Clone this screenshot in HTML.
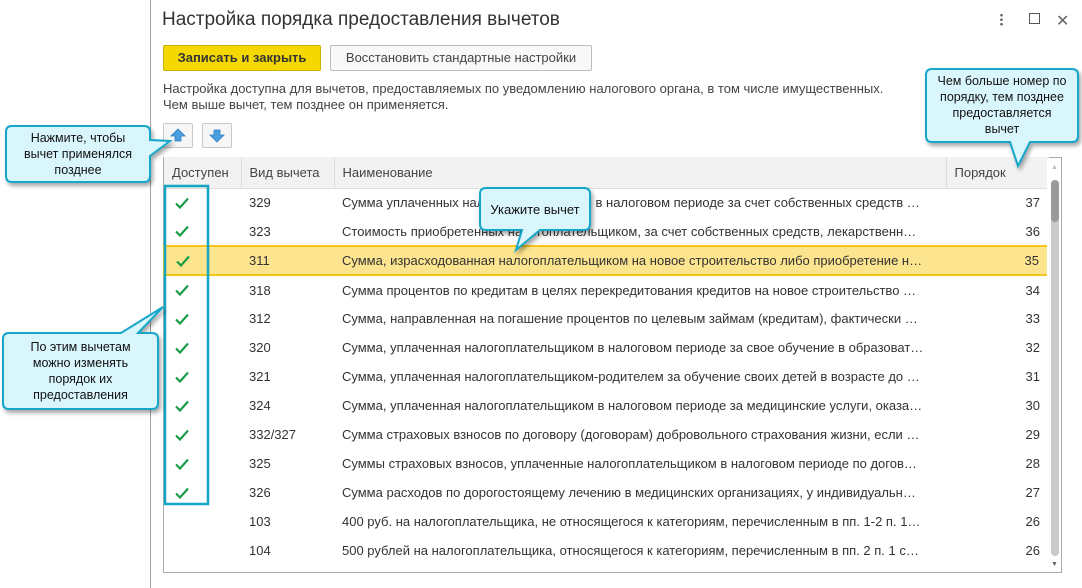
<!DOCTYPE html>
<html><head><meta charset="utf-8"><style>
*{box-sizing:border-box;margin:0;padding:0}
body{width:1082px;height:588px;background:#fff;font-family:"Liberation Sans",Arial,sans-serif;position:relative;overflow:hidden;color:#333}
.abs{position:absolute}
.vl{left:150px;top:0;width:1px;height:588px;background:#a0a0a0}
.title{left:162px;top:9px;font-size:19px;color:#333}
.btn{top:45px;height:26px;border-radius:2px;font-size:13px;line-height:24px;text-align:center}
.b1{left:163px;width:158px;background:#f5d800;border:1px solid #c9b100;font-weight:bold;color:#333}
.b2{left:330px;width:262px;background:#f8f8f8;border:1px solid #bdbdbd;color:#444}
.txt{left:163px;top:81px;font-size:13px;line-height:15.5px;color:#444}
.ab{top:123px;width:30px;height:25px;border:1px solid #c8c8c8;border-radius:2px;background:#f6f6f6}
table{position:absolute;left:163px;top:157px;width:884px;border-collapse:collapse;font-size:13px;table-layout:fixed}
th{height:31px;background:#f2f2f2;font-weight:normal;text-align:left;padding-left:8px;color:#444;border-right:1px solid #ddd;border-bottom:1px solid #ddd}
td{height:29px;padding-left:8px;white-space:nowrap;overflow:hidden;color:#333}
td.n{text-align:right;padding-right:8px}
td.c{padding-left:11px;padding-top:3px}
tr.sel td{background:#fde58f;border-top:2px solid #f6c51a;border-bottom:2px solid #f6c51a}
tr.sel td:first-child{border-left:2px solid #f6c51a}
tr.sel td:last-child{border-right:2px solid #f6c51a}
.frame{left:163px;top:157px;width:899px;height:416px;border:1px solid #aaa}
.ct{font-size:12.5px;color:#111;text-align:center;line-height:16px}
</style></head><body>
<svg width="0" height="0" style="position:absolute"><defs><symbol id="ck" viewBox="0 0 14 12"><path d="M1 6.5 L5 10.5 L13 1.5" fill="none" stroke="#1a9c4a" stroke-width="2.2"/></symbol></defs></svg>
<div class="abs vl"></div>
<div class="abs title">Настройка порядка предоставления вычетов</div>
<div class="abs" style="left:1000px;top:13px;width:3px;height:13px;background:radial-gradient(circle,#666 1.2px,transparent 1.5px) 0 0/3px 4.5px"></div>
<div class="abs" style="left:1029px;top:13px;width:11px;height:11px;border:1.3px solid #555"></div>
<div class="abs" style="left:1056px;top:11px;font-size:16px;color:#666">✕</div>
<div class="abs btn b1">Записать и закрыть</div>
<div class="abs btn b2">Восстановить стандартные настройки</div>
<div class="abs txt">Настройка доступна для вычетов, предоставляемых по уведомлению налогового органа, в том числе имущественных.<br>Чем выше вычет, тем позднее он применяется.</div>
<div class="abs ab" style="left:163px"><svg width="28" height="23"><path d="M14 5 L21 12 L17 12 L17 17 L11 17 L11 12 L7 12 Z" fill="#4a9fe0" stroke="#2f7fc0" stroke-width="0.8"/></svg></div>
<div class="abs ab" style="left:202px"><svg width="28" height="23"><path d="M14 18 L21 11 L17 11 L17 6 L11 6 L11 11 L7 11 Z" fill="#4a9fe0" stroke="#2f7fc0" stroke-width="0.8"/></svg></div>
<div class="abs frame"></div>
<table>
<colgroup><col style="width:77px"><col style="width:93px"><col style="width:612px"><col style="width:102px"></colgroup>
<tr><th>Доступен</th><th>Вид вычета</th><th>Наименование</th><th>Порядок</th></tr>
<tr><td class="c"><svg width="14" height="12"><use href="#ck"/></svg></td><td>329</td><td>Сумма уплаченных налогоплательщиком в налоговом периоде за счет собственных средств …</td><td class="n">37</td></tr>
<tr><td class="c"><svg width="14" height="12"><use href="#ck"/></svg></td><td>323</td><td>Стоимость приобретенных налогоплательщиком, за счет собственных средств, лекарственн…</td><td class="n">36</td></tr>
<tr class="sel"><td class="c"><svg width="14" height="12"><use href="#ck"/></svg></td><td>311</td><td>Сумма, израсходованная налогоплательщиком на новое строительство либо приобретение н…</td><td class="n">35</td></tr>
<tr><td class="c"><svg width="14" height="12"><use href="#ck"/></svg></td><td>318</td><td>Сумма процентов по кредитам в целях перекредитования кредитов на новое строительство …</td><td class="n">34</td></tr>
<tr><td class="c"><svg width="14" height="12"><use href="#ck"/></svg></td><td>312</td><td>Сумма, направленная на погашение процентов по целевым займам (кредитам), фактически …</td><td class="n">33</td></tr>
<tr><td class="c"><svg width="14" height="12"><use href="#ck"/></svg></td><td>320</td><td>Сумма, уплаченная налогоплательщиком в налоговом периоде за свое обучение в образоват…</td><td class="n">32</td></tr>
<tr><td class="c"><svg width="14" height="12"><use href="#ck"/></svg></td><td>321</td><td>Сумма, уплаченная налогоплательщиком-родителем за обучение своих детей в возрасте до …</td><td class="n">31</td></tr>
<tr><td class="c"><svg width="14" height="12"><use href="#ck"/></svg></td><td>324</td><td>Сумма, уплаченная налогоплательщиком в налоговом периоде за медицинские услуги, оказа…</td><td class="n">30</td></tr>
<tr><td class="c"><svg width="14" height="12"><use href="#ck"/></svg></td><td>332/327</td><td>Сумма страховых взносов по договору (договорам) добровольного страхования жизни, если …</td><td class="n">29</td></tr>
<tr><td class="c"><svg width="14" height="12"><use href="#ck"/></svg></td><td>325</td><td>Суммы страховых взносов, уплаченные налогоплательщиком в налоговом периоде по догов…</td><td class="n">28</td></tr>
<tr><td class="c"><svg width="14" height="12"><use href="#ck"/></svg></td><td>326</td><td>Сумма расходов по дорогостоящему лечению в медицинских организациях, у индивидуальн…</td><td class="n">27</td></tr>
<tr><td class="c"></td><td>103</td><td>400 руб. на налогоплательщика, не относящегося к категориям, перечисленным в пп. 1-2 п. 1…</td><td class="n">26</td></tr>
<tr><td class="c"></td><td>104</td><td>500 рублей на налогоплательщика, относящегося к категориям, перечисленным в пп. 2 п. 1 с…</td><td class="n">26</td></tr>
</table>
<div class="abs" style="left:1047px;top:158px;width:14px;height:414px;background:#fff"></div>
<div class="abs" style="left:1051px;top:180px;width:8px;height:376px;border-radius:4px;background:#c9c9c9"></div>
<div class="abs" style="left:1051px;top:180px;width:8px;height:42px;border-radius:4px;background:#9a9a9a"></div>
<div class="abs" style="left:1051px;top:164px;font-size:7px;color:#bbb">▲</div>
<div class="abs" style="left:1051px;top:561px;font-size:7px;color:#666">▼</div>
<svg class="abs" style="left:0;top:0" width="1082" height="588">
<defs><filter id="sh" x="-20%" y="-20%" width="140%" height="140%"><feDropShadow dx="2" dy="3" stdDeviation="2" flood-color="#000" flood-opacity="0.35"/></filter></defs>
<rect x="165" y="186" width="43" height="318" fill="none" stroke="#14a4c4" stroke-width="2.5"/>
<g fill="#daf6fd" stroke="#17a6c8" stroke-width="2" filter="url(#sh)">
<path d="M12 126 H144 Q150 126 150 132 V140 L170 141 L150 156 V176 Q150 182 144 182 H12 Q6 182 6 176 V132 Q6 126 12 126 Z"/>
<path d="M486 188 H584 Q590 188 590 194 V224 Q590 230 584 230 H540 L516 250 L522 230 H486 Q480 230 480 224 V194 Q480 188 486 188 Z"/>
<path d="M932 69 H1072 Q1078 69 1078 75 V136 Q1078 142 1072 142 H1030 L1018 166 L1010 142 H932 Q926 142 926 136 V75 Q926 69 932 69 Z"/>
<path d="M9 333 H121 L163 307 L138 333 H152 Q158 333 158 339 V403 Q158 409 152 409 H9 Q3 409 3 403 V339 Q3 333 9 333 Z"/>
</g>
</svg>
<div class="abs ct" style="left:6px;top:130px;width:144px">Нажмите, чтобы<br>вычет применялся<br>позднее</div>
<div class="abs ct" style="left:480px;top:202px;width:110px;font-size:13px">Укажите вычет</div>
<div class="abs ct" style="left:926px;top:73px;width:152px">Чем больше номер по<br>порядку, тем позднее<br>предоставляется<br>вычет</div>
<div class="abs ct" style="left:3px;top:339px;width:155px">По этим вычетам<br>можно изменять<br>порядок их<br>предоставления</div>
</body></html>
